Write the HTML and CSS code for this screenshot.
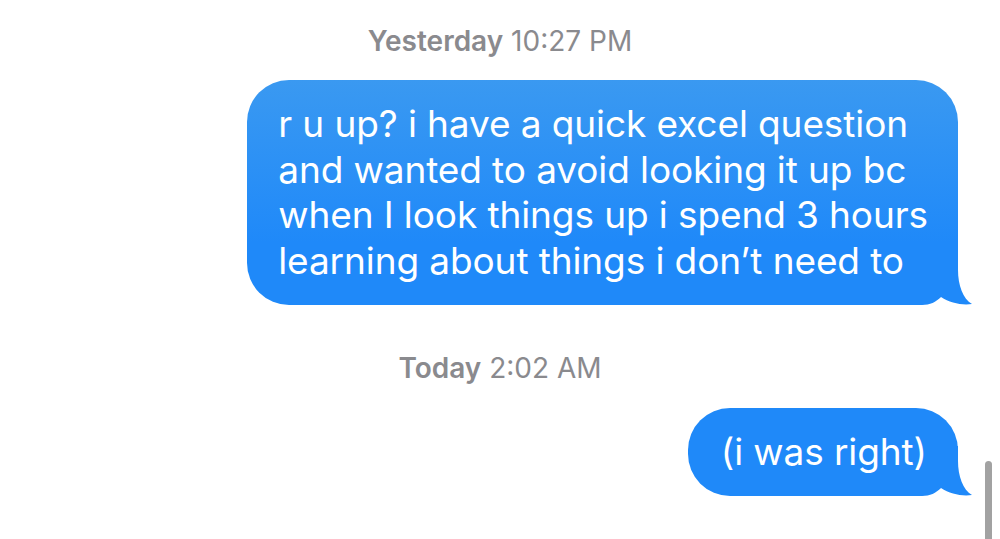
FILE: index.html
```html
<!DOCTYPE html>
<html>
<head>
<meta charset="utf-8">
<link rel="stylesheet" href="styles.css">
</head>
<body>
<div class="thread">
  <div class="stamp"><b>Yesterday</b> 10:27 PM</div>
  <div class="row row-first">
    <div class="bubble bubble-long">
      <svg class="tail" width="58" height="50" viewBox="0 0 58 50"><path d="M0 0 H42 V15 C42 30 47 44 56 49 C46 50.5 34 48 25 42 C20 47 14 50 6 50 H0 Z"/></svg>
      <span class="text">r u up? i have a quick excel question<br>and wanted to avoid looking it up bc<br>when I look things up i spend 3 hours<br>learning about things i don’t need to</span>
    </div>
  </div>
  <div class="stamp stamp-today"><b>Today</b> 2:02 AM</div>
  <div class="row row-second">
    <div class="bubble bubble-short">
      <svg class="tail" width="58" height="50" viewBox="0 0 58 50"><path d="M0 0 H42 V15 C42 30 47 44 56 49 C46 50.5 34 48 25 42 C20 47 14 50 6 50 H0 Z"/></svg>
      <span class="text">(i was right)</span>
    </div>
  </div>
</div>
<div class="scrollbar"></div>
</body>
</html>
```

FILE: styles.css
```css
html {
  background: #ffffff;
}

body {
  margin: 0;
  padding: 0;
  width: 1000px;
  height: 539px;
  overflow: hidden;
  font-family: Inter, "Liberation Sans", sans-serif;
}

.thread {
  display: flex;
  flex-direction: column;
  padding-top: 24px;
}

.stamp {
  text-align: center;
  font-size: 28px;
  line-height: 34px;
  color: #8a8a8e;
  letter-spacing: 0;
}

.stamp b {
  font-weight: 600;
}

.stamp-today {
  margin-top: 46px;
}

.row {
  display: flex;
  justify-content: flex-end;
  padding-right: 42px;
}

.row-first {
  margin-top: 22px;
}

.row-second {
  margin-top: 23px;
}

.bubble {
  position: relative;
  color: #ffffff;
  font-size: 37px;
  line-height: 45.5px;
  letter-spacing: -0.1px;
  border-radius: 42px;
}

.bubble .text {
  position: relative;
  z-index: 1;
}

.bubble-long {
  padding: 21px 30px 22px 31px;
  background: linear-gradient(#3a99f1, #1f89f9 72%, #1f89f9);
}

.bubble-short {
  padding: 21px 31px 21px 33px;
  background: #1f89f9;
}

.tail {
  position: absolute;
  right: -16px;
  bottom: 0;
  display: block;
}

.tail path {
  fill: #1f89f9;
}

.scrollbar {
  position: absolute;
  left: 985px;
  top: 461px;
  width: 7px;
  height: 90px;
  border-radius: 4px;
  background: #a2a2a2;
}
```
